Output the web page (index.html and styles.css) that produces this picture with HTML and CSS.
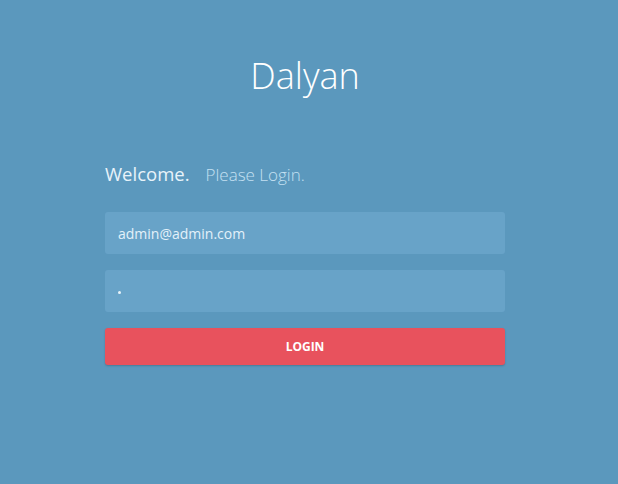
FILE: index.html
```html
<!DOCTYPE html>
<html>
<head>
<meta charset="utf-8">
<link rel="stylesheet" href="styles.css">
</head>
<body>
<main class="page">
  <h1 class="brand">Dalyan</h1>
  <form class="login">
    <p class="greet"><span class="welcome">Welcome.</span><span class="sub">Please Login.</span></p>
    <div class="field">admin@admin.com</div>
    <div class="field"><span class="dot"></span></div>
    <button type="button" class="btn">LOGIN</button>
  </form>
</main>
</body>
</html>
```
FILE: styles.css
```css
html, body {
  margin: 0;
  padding: 0;
  height: 100%;
}
body {
  background: #5b98bd;
  font-family: "Open Sans", sans-serif;
}
.page {
  display: flex;
  flex-direction: column;
  align-items: center;
  padding-top: 52px;
  padding-right: 8px;
}
.brand {
  margin: 0;
  font-weight: 300;
  font-size: 36px;
  line-height: 48px;
  color: #ffffff;
}
.login {
  width: 400px;
  margin-top: 60px;
  display: flex;
  flex-direction: column;
}
.greet {
  margin: 0 0 23px 0;
  line-height: 28px;
}
.welcome {
  font-size: 18.5px;
  font-weight: 500;
  color: #e8f3fa;
  margin-right: 16px;
}
.sub {
  font-size: 17px;
  font-weight: 300;
  color: #c4e0f2;
}
.field {
  height: 42px;
  background: #68a3c8;
  border-radius: 3px;
  margin-bottom: 16px;
  padding: 0 13px;
  display: flex;
  align-items: center;
  font-size: 14px;
  color: #e3f1fa;
}
.dot {
  width: 3px;
  height: 3px;
  border-radius: 50%;
  background: #e8f3fa;
  margin-top: 2px;
}
.btn {
  height: 37px;
  border: 0;
  border-radius: 3px;
  background: #e8525d;
  color: #ffffff;
  font-family: "Open Sans", sans-serif;
  font-weight: 700;
  font-size: 12px;
  box-shadow: 0 1px 2px rgba(0,0,0,0.2);
  padding: 0;
}
```
